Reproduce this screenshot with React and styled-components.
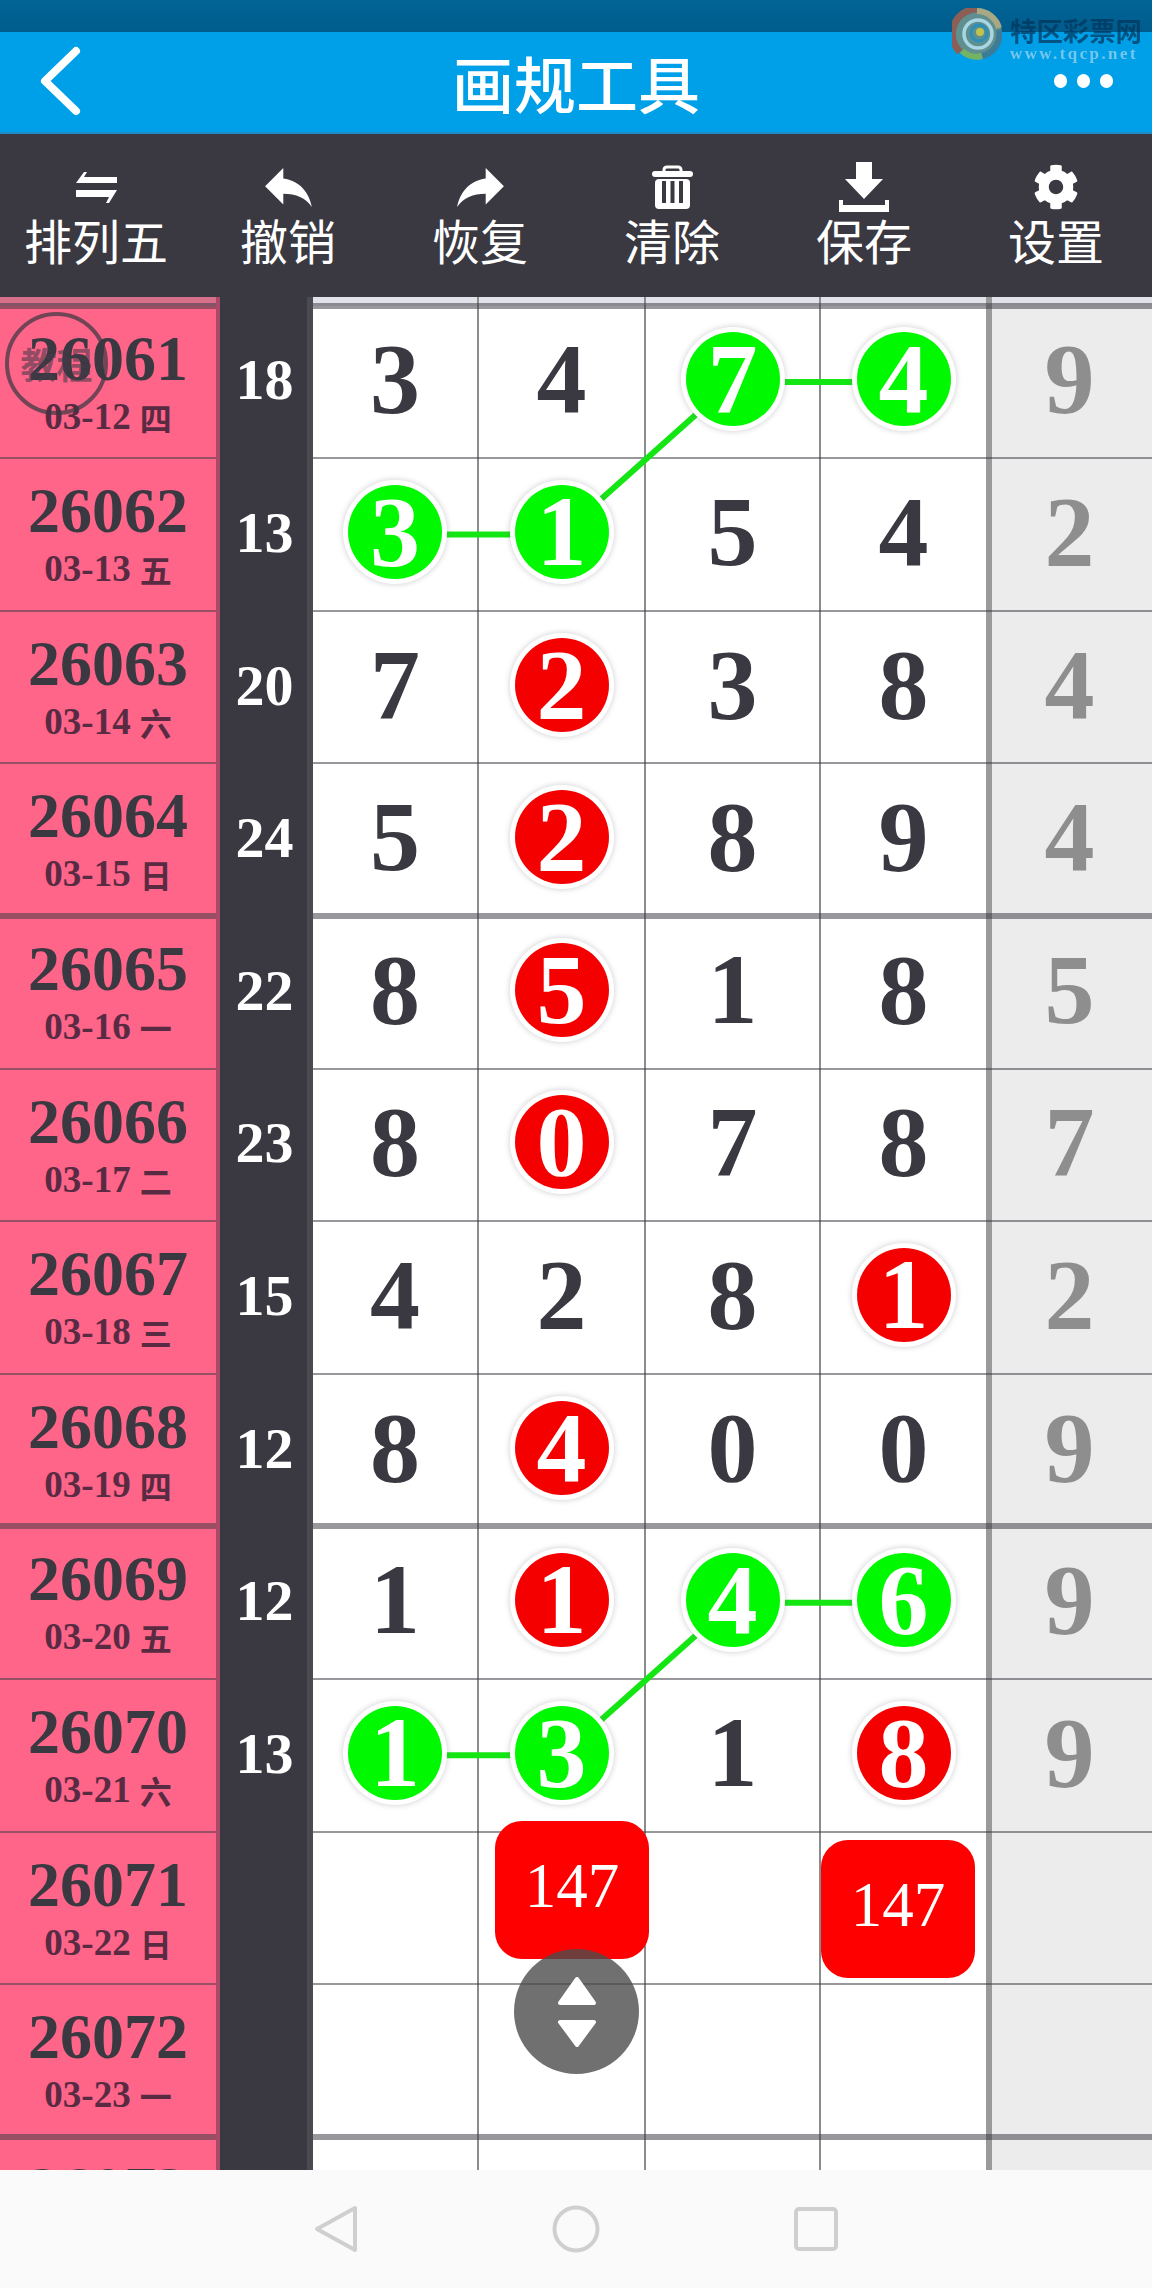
import React from 'react';
import styled, { createGlobalStyle, css } from 'styled-components';
import { FaCog } from 'react-icons/fa';

const DARK = '#3a3941';
const ROW_H = 152.6;
const STRIP_H = 8.6;
const COL_X = [395, 561.5, 732.5, 903.5];

const GlobalStyle = createGlobalStyle`
  html, body {
    margin: 0;
    padding: 0;
    background: #fff;
  }
  body {
    width: 1152px;
    height: 2288px;
    overflow: hidden;
    font-family: "Liberation Serif", "Noto Sans CJK SC", serif;
  }
`;

const Page = styled.div`
  position: relative;
  width: 1152px;
  height: 2288px;
  overflow: hidden;
  display: flex;
  flex-direction: column;
`;

const StatusBar = styled.div`
  height: 32px;
  flex: none;
  background: linear-gradient(#006596, #005c8c);
`;

const Header = styled.div`
  height: 102px;
  flex: none;
  box-sizing: border-box;
  border-bottom: 2px solid #1d8cc7;
  background: #00a0e9;
  display: flex;
  align-items: center;
`;

const HeaderSide = styled.div`
  width: 160px;
  height: 100%;
  display: flex;
  align-items: center;
  justify-content: ${(p) => (p.$end ? 'flex-end' : 'flex-start')};
  padding: ${(p) => (p.$end ? '0 39px 2px 0' : '0 0 2px 38px')};
  box-sizing: border-box;
`;

const Title = styled.div`
  flex: 1;
  text-align: center;
  color: #fff;
  font: 500 62px/1 "Noto Sans CJK SC", sans-serif;
`;

const Dots = styled.div`
  display: flex;
  gap: 9.5px;
`;

const Dot = styled.span`
  width: 13.5px;
  height: 13.5px;
  border-radius: 50%;
  background: #fff;
`;

const Watermark = styled.div`
  position: absolute;
  left: 952px;
  top: 8px;
  width: 200px;
  height: 54px;
  display: flex;
  filter: blur(0.6px);
`;

const WatermarkText = styled.div`
  margin-left: 8px;
  padding-top: 8px;
`;

const WatermarkName = styled.div`
  color: rgba(0, 52, 92, 0.72);
  font: 700 26.4px/28px "Noto Sans CJK SC", sans-serif;
  white-space: nowrap;
`;

const WatermarkUrl = styled.div`
  margin-top: 2px;
  color: #74c6ec;
  font: 700 17px/16px "Liberation Serif", serif;
  letter-spacing: 2.4px;
  white-space: nowrap;
`;

const Toolbar = styled.div`
  height: 163px;
  flex: none;
  background: ${DARK};
  display: grid;
  grid-template-columns: repeat(6, 192px);
  padding-top: 28px;
  box-sizing: border-box;
`;

const ToolItem = styled.div`
  display: flex;
  flex-direction: column;
  align-items: center;
  color: #fff;
`;

const ToolIcon = styled.div`
  height: 50px;
  display: flex;
  align-items: center;
  justify-content: center;
`;

const ToolLabel = styled.div`
  margin-top: 4px;
  font: 400 48px/46px "Noto Sans CJK SC", sans-serif;
  white-space: nowrap;
`;

const Board = styled.div`
  position: relative;
  flex: none;
  height: 1873px;
  overflow: hidden;
`;

const Row = styled.div`
  display: flex;
  height: ${(p) => p.$h}px;
`;

const rowLine = css`
  &::after {
    content: '';
    position: absolute;
    left: 0;
    right: 0;
    z-index: 1;
    background: rgba(58, 57, 65, 0.52);
    bottom: ${(p) => (p.$heavy ? '-3px' : '-1px')};
    height: ${(p) => (p.$heavy ? '6px' : '2px')};
  }
`;

const Info = styled.div`
  position: relative;
  width: 220px;
  flex: none;
  box-sizing: border-box;
  border-right: 4px solid #a84a68;
  background: ${(p) => (p.$strip ? '#d8708c' : '#ff6489')};
  display: flex;
  flex-direction: column;
  align-items: center;
  padding-top: ${(p) => (p.$strip ? 0 : '22px')};
  ${rowLine}
`;

const Issue = styled.div`
  color: ${DARK};
  font: 700 64px/62px "Liberation Serif", serif;
`;

const DateLine = styled.div`
  margin-top: 7px;
  color: #582b43;
  font: 700 37px/40px "Liberation Serif", "Noto Sans CJK SC", serif;
  display: flex;
  align-items: center;
  gap: 9px;
`;

const Weekday = styled.span`
  font: 700 32px/40px "Noto Sans CJK SC", sans-serif;
`;

const Stamp = styled.div`
  position: absolute;
  left: 5px;
  top: 6px;
  width: 103px;
  height: 103px;
  box-sizing: border-box;
  border: 4px solid rgba(58, 57, 65, 0.72);
  border-radius: 50%;
  z-index: 2;
  display: flex;
  align-items: center;
  justify-content: center;
  color: rgba(70, 60, 75, 0.6);
  font: 700 36px/1 "Noto Sans CJK SC", sans-serif;
  white-space: nowrap;
`;

const Sum = styled.div`
  width: 87px;
  flex: none;
  background: ${DARK};
  color: #fff;
  font: 700 58px/1 "Liberation Serif", serif;
  display: flex;
  align-items: center;
  justify-content: center;
  padding: 0 0 3px 2px;
  box-sizing: border-box;
`;

const Cells = styled.div`
  position: relative;
  flex: 1;
  box-sizing: border-box;
  border-left: 6px solid;
  border-image: linear-gradient(90deg, #4a4a50, #5c5c61 60%, #a8a8a8) 1;
  background: ${(p) => (p.$strip ? '#e2e2ea' : '#fff')};
  display: grid;
  grid-template-columns: 166px 167px 175px 171px 1fr;
  ${rowLine}
`;

const Cell = styled.div`
  box-sizing: border-box;
  display: flex;
  align-items: center;
  justify-content: center;
  padding-bottom: 5px;
  color: ${DARK};
  font: 700 100px/1 "Liberation Serif", serif;
  border-right: 2px solid #8c8c8c;

  &:nth-child(4) {
    border-right: 6px solid #9a9a9a;
  }

  &:nth-child(5) {
    border-right: none;
    padding-right: 5px;
    color: #8e8e8e;
    background: ${(p) => (p.$strip ? 'transparent' : '#ececec')};
  }
`;

const Ball = styled.div`
  position: relative;
  z-index: 3;
  width: 94px;
  height: 94px;
  border-radius: 50%;
  background: ${(p) => (p.$tone === 'g' ? '#00f800' : '#f50000')};
  color: #fff;
  box-shadow: 0 0 0 5px #fff, 0 0 5px 6px rgba(110, 100, 120, 0.26);
  display: flex;
  align-items: center;
  justify-content: center;
`;

const Lines = styled.svg`
  position: absolute;
  left: 0;
  top: 0;
  z-index: 2;
  pointer-events: none;
`;

const Badge = styled.div`
  position: absolute;
  left: ${(p) => p.$x}px;
  top: ${(p) => p.$y}px;
  z-index: 4;
  width: 154px;
  height: 138px;
  padding-bottom: 8px;
  box-sizing: border-box;
  border-radius: 27px;
  background: #fe0000;
  color: #fff;
  font: 400 63px/1 "Liberation Serif", serif;
  display: flex;
  align-items: center;
  justify-content: center;
`;

const Scroller = styled.div`
  position: absolute;
  left: 514px;
  top: 1652px;
  z-index: 5;
  width: 125px;
  height: 125px;
  border-radius: 50%;
  background: rgba(76, 76, 76, 0.8);
  display: flex;
  align-items: center;
  justify-content: center;
`;

const NavBar = styled.div`
  flex: 1;
  background: #fafafa;
  display: flex;
  justify-content: center;
  align-items: center;
`;

const NavSlot = styled.div`
  width: 240px;
  display: flex;
  justify-content: center;
`;

const rows = [
  { id: '26061', date: '03-12', day: '四', sum: 18, cells: ['3', '4', '7g', '4g', '9'], stamp: true },
  { id: '26062', date: '03-13', day: '五', sum: 13, cells: ['3g', '1g', '5', '4', '2'] },
  { id: '26063', date: '03-14', day: '六', sum: 20, cells: ['7', '2r', '3', '8', '4'] },
  { id: '26064', date: '03-15', day: '日', sum: 24, cells: ['5', '2r', '8', '9', '4'], heavy: true },
  { id: '26065', date: '03-16', day: '一', sum: 22, cells: ['8', '5r', '1', '8', '5'] },
  { id: '26066', date: '03-17', day: '二', sum: 23, cells: ['8', '0r', '7', '8', '7'] },
  { id: '26067', date: '03-18', day: '三', sum: 15, cells: ['4', '2', '8', '1r', '2'] },
  { id: '26068', date: '03-19', day: '四', sum: 12, cells: ['8', '4r', '0', '0', '9'], heavy: true },
  { id: '26069', date: '03-20', day: '五', sum: 12, cells: ['1', '1r', '4g', '6g', '9'] },
  { id: '26070', date: '03-21', day: '六', sum: 13, cells: ['1g', '3g', '1', '8r', '9'] },
  { id: '26071', date: '03-22', day: '日', sum: '', cells: ['', '', '', '', ''] },
  { id: '26072', date: '03-23', day: '一', sum: '', cells: ['', '', '', '', ''], heavy: true },
  { id: '26073', sum: '', cells: ['', '', '', '', ''] },
];

// [row, col] pairs joined by a green line
const links = [
  [[0, 2], [0, 3]],
  [[1, 0], [1, 1]],
  [[1, 1], [0, 2]],
  [[8, 2], [8, 3]],
  [[9, 0], [9, 1]],
  [[9, 1], [8, 2]],
];

const rowY = (r) => STRIP_H + ROW_H * r + ROW_H / 2;

const Connectors = () => (
  <Lines width="1152" height="1873">
    {links.map(([a, b]) => (
      <line
        key={`${a}-${b}`}
        x1={COL_X[a[1]]}
        y1={rowY(a[0])}
        x2={COL_X[b[1]]}
        y2={rowY(b[0])}
        stroke="#14e614"
        strokeWidth="6"
      />
    ))}
  </Lines>
);

const SwapIcon = () => (
  <svg width="41" height="31" viewBox="0 0 41 31" fill="#fff">
    <polygon points="0,11 8,0 11,0 8,5 41,5 41,11" />
    <polygon points="0,18 41,18 33,31 30,31 33,25 0,25" />
  </svg>
);

const UndoIcon = () => (
  <svg width="47" height="39" viewBox="3 5 18 15" fill="#fff">
    <path d="M10 9V5l-7 7 7 7v-4.1c5 0 8.5 1.6 11 5.1-1-5-4-10-11-11z" />
  </svg>
);

const RedoIcon = () => (
  <svg width="47" height="39" viewBox="3 5 18 15" fill="#fff">
    <path d="M14 9V5l7 7-7 7v-4.1c-5 0-8.5 1.6-11 5.1 1-5 4-10 11-11z" />
  </svg>
);

const TrashIcon = () => (
  <svg width="41" height="44" viewBox="0 0 41 44" fill="#fff">
    <path d="M12 7V4.5A3 3 0 0 1 15 2h11a3 3 0 0 1 3 2.5V7" fill="none" stroke="#fff" strokeWidth="3" />
    <rect x="0" y="6" width="41" height="6" rx="3" />
    <rect x="3" y="14" width="35" height="30" rx="4" />
    <rect x="10" y="16" width="4" height="22" fill={DARK} />
    <rect x="18.5" y="16" width="4" height="22" fill={DARK} />
    <rect x="27" y="16" width="4" height="22" fill={DARK} />
  </svg>
);

const SaveIcon = () => (
  <svg width="50" height="50" viewBox="0 0 50 50" fill="#fff">
    <polygon points="17,0 33,0 33,17 44,17 25,37 6,17 17,17" />
    <polygon points="0,38 4,38 4,43 46,43 46,38 50,38 50,50 0,50" />
  </svg>
);

const Swirl = () => (
  <svg width="50" height="52" viewBox="0 0 50 52" fill="none">
    <circle cx="25" cy="26" r="25" fill="#5f8f8f" />
    <path d="M25 1A25 25 0 0 0 8 44" stroke="#8b5f55" strokeWidth="7" />
    <path d="M25 3A23 23 0 0 1 47 20" stroke="#a8a884" strokeWidth="6" />
    <path d="M47 22A22 22 0 0 1 30 48" stroke="#3d7c98" strokeWidth="6" />
    <path d="M30 48A22 22 0 0 1 10 43" stroke="#72b365" strokeWidth="6" />
    <circle cx="26" cy="26" r="14" stroke="#a9d6e4" strokeWidth="3.5" />
    <circle cx="27" cy="25" r="8" stroke="#2c8fb8" strokeWidth="3" />
    <circle cx="28" cy="24" r="4" fill="#c2c24e" />
  </svg>
);

const UpDown = () => (
  <svg width="40" height="72" viewBox="0 0 40 72" fill="#fff" stroke="#fff" strokeWidth="4" strokeLinejoin="round">
    <polygon points="20,3 37,27 3,27" />
    <polygon points="3,46 37,46 20,69" />
  </svg>
);

const tools = [
  { label: '排列五', icon: <SwapIcon /> },
  { label: '撤销', icon: <UndoIcon /> },
  { label: '恢复', icon: <RedoIcon /> },
  { label: '清除', icon: <TrashIcon /> },
  { label: '保存', icon: <SaveIcon /> },
  { label: '设置', icon: <FaCog size={46} /> },
];

const App = () => (
  <Page>
    <GlobalStyle />
    <StatusBar />
    <Header>
      <HeaderSide>
        <svg width="44" height="70" viewBox="0 0 44 70" fill="none" stroke="#fff" strokeWidth="8" strokeLinecap="round" strokeLinejoin="round">
          <polyline points="38,5 7,35 38,65" />
        </svg>
      </HeaderSide>
      <Title>画规工具</Title>
      <HeaderSide $end>
        <Dots>
          <Dot />
          <Dot />
          <Dot />
        </Dots>
      </HeaderSide>
    </Header>
    <Watermark>
      <Swirl />
      <WatermarkText>
        <WatermarkName>特区彩票网</WatermarkName>
        <WatermarkUrl>www.tqcp.net</WatermarkUrl>
      </WatermarkText>
    </Watermark>
    <Toolbar>
      {tools.map((tool) => (
        <ToolItem key={tool.label}>
          <ToolIcon>{tool.icon}</ToolIcon>
          <ToolLabel>{tool.label}</ToolLabel>
        </ToolItem>
      ))}
    </Toolbar>
    <Board>
      <Row $h={STRIP_H}>
        <Info $strip $heavy />
        <Sum />
        <Cells $strip $heavy>
          {[0, 1, 2, 3, 4].map((i) => (
            <Cell key={i} $strip />
          ))}
        </Cells>
      </Row>
      {rows.map((row) => (
        <Row key={row.id} $h={ROW_H}>
          <Info $heavy={row.heavy}>
            {row.stamp && <Stamp>教程</Stamp>}
            <Issue>{row.id}</Issue>
            {row.date && (
              <DateLine>
                {row.date}
                <Weekday>{row.day}</Weekday>
              </DateLine>
            )}
          </Info>
          <Sum>{row.sum}</Sum>
          <Cells $heavy={row.heavy}>
            {row.cells.map((value, i) => (
              <Cell key={i}>
                {value[1] ? <Ball $tone={value[1]}>{value[0]}</Ball> : value}
              </Cell>
            ))}
          </Cells>
        </Row>
      ))}
      <Connectors />
      <Badge $x={495} $y={1524}>147</Badge>
      <Badge $x={821} $y={1543}>147</Badge>
      <Scroller>
        <UpDown />
      </Scroller>
    </Board>
    <NavBar>
      <NavSlot>
        <svg width="44" height="48" viewBox="0 0 44 48" fill="none" stroke="#cfcfcf" strokeWidth="4" strokeLinejoin="round">
          <polygon points="3,24 41,3 41,45" />
        </svg>
      </NavSlot>
      <NavSlot>
        <svg width="48" height="48" viewBox="0 0 48 48" fill="none" stroke="#cfcfcf" strokeWidth="4">
          <circle cx="24" cy="24" r="21.5" />
        </svg>
      </NavSlot>
      <NavSlot>
        <svg width="44" height="44" viewBox="0 0 44 44" fill="none" stroke="#cfcfcf" strokeWidth="4">
          <rect x="2" y="2" width="40" height="40" rx="3" />
        </svg>
      </NavSlot>
    </NavBar>
  </Page>
);

export default App;
